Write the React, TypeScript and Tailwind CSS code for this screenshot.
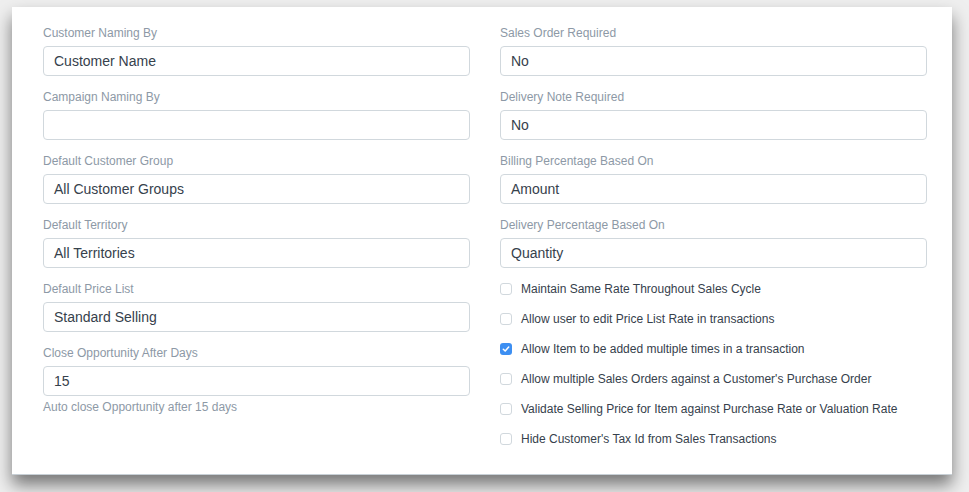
import React from 'react';

const leftFields = [
  { label: 'Customer Naming By', value: 'Customer Name' },
  { label: 'Campaign Naming By', value: '' },
  { label: 'Default Customer Group', value: 'All Customer Groups' },
  { label: 'Default Territory', value: 'All Territories' },
  { label: 'Default Price List', value: 'Standard Selling' },
  { label: 'Close Opportunity After Days', value: '15', help: 'Auto close Opportunity after 15 days' },
];

const rightFields = [
  { label: 'Sales Order Required', value: 'No' },
  { label: 'Delivery Note Required', value: 'No' },
  { label: 'Billing Percentage Based On', value: 'Amount' },
  { label: 'Delivery Percentage Based On', value: 'Quantity' },
];

const checks = [
  { label: 'Maintain Same Rate Throughout Sales Cycle', checked: false },
  { label: 'Allow user to edit Price List Rate in transactions', checked: false },
  { label: 'Allow Item to be added multiple times in a transaction', checked: true },
  { label: "Allow multiple Sales Orders against a Customer's Purchase Order", checked: false },
  { label: 'Validate Selling Price for Item against Purchase Rate or Valuation Rate', checked: false },
  { label: "Hide Customer's Tax Id from Sales Transactions", checked: false },
];

type Field = { label: string; value: string; help?: string };

const FormField: React.FC<{ field: Field }> = ({ field }) => (
  <div className="mb-3">
    <div className="h-[18px] text-[12px] leading-[18px] text-[#8d99a6]">{field.label}</div>
    <div className="mt-1 flex h-[30px] items-center rounded-[4px] border border-[#d1d8dd] bg-white px-[10px] text-[14px] text-[#36414c]">
      {field.value}
    </div>
    {field.help && (
      <div className="mt-[3px] text-[12px] leading-[16px] text-[#8d99a6]">{field.help}</div>
    )}
  </div>
);

const Check: React.FC<{ label: string; checked: boolean }> = ({ label, checked }) => (
  <div className="flex h-[18px] items-center gap-[9px]">
    {checked ? (
      <div className="flex h-[12px] w-[12px] items-center justify-center rounded-[3px] bg-[#3d8ff2]">
        <svg width="8" height="8" viewBox="0 0 8 8">
          <path d="M1.3 4.2 L3.2 6 L6.7 2" fill="none" stroke="white" strokeWidth="1.5" strokeLinecap="round" strokeLinejoin="round" />
        </svg>
      </div>
    ) : (
      <div className="h-[12px] w-[12px] rounded-[3px] border border-[#d1d8dd] bg-white" />
    )}
    <span className="text-[12px] text-[#36414c]">{label}</span>
  </div>
);

export default function App() {
  return (
    <div
      className="h-[492px] w-[969px] overflow-hidden bg-[#efefef] pl-[12px] pt-[7px]"
      style={{ fontFamily: '"Liberation Sans", Arial, sans-serif' }}
    >
      <div className="h-[468px] w-[940px] border-b border-[#c8d0d6] bg-white pl-[31px] pt-[17px] shadow-[0_10px_16px_rgba(0,0,0,0.5)]">
        <div className="flex gap-[30px]">
          {/* Left column */}
          <div className="w-[427px]">
            {leftFields.map((f) => (
              <FormField key={f.label} field={f} />
            ))}
          </div>

          {/* Right column */}
          <div className="w-[427px]">
            {rightFields.map((f) => (
              <FormField key={f.label} field={f} />
            ))}
            <div className="flex flex-col gap-3">
              {checks.map((c) => (
                <Check key={c.label} label={c.label} checked={c.checked} />
              ))}
            </div>
          </div>
        </div>
      </div>
    </div>
  );
}
